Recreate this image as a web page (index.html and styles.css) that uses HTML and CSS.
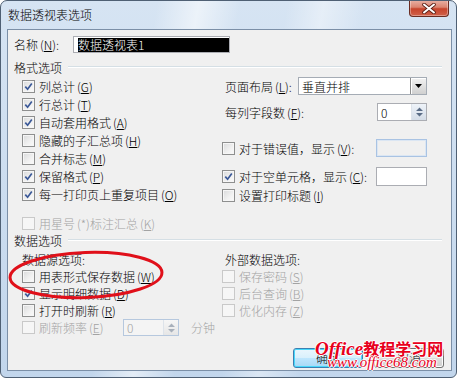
FILE: index.html
```html
<!DOCTYPE html>
<html lang="zh-CN">
<head>
<meta charset="utf-8">
<title>数据透视表选项</title>
<link rel="stylesheet" href="styles.css">
</head>
<body>
<div class="window">
  <div class="titlebar">
    <span class="title">数据透视表选项</span>
    <div class="close">
      <svg width="14" height="11" viewBox="0 0 14 11"><path d="M2 1.5 L12 9.5 M12 1.5 L2 9.5" stroke="#5a1e14" stroke-width="3.6" stroke-linecap="round"/><path d="M2 1.5 L12 9.5 M12 1.5 L2 9.5" stroke="#fff" stroke-width="2" stroke-linecap="round"/></svg>
    </div>
  </div>
  <div class="client">
    <div class="name-row">
      <span class="name-lbl">名称<span class="mn">(<u>N</u>)</span>:</span>
      <div class="name-input"><span class="sel">数据透视表1</span></div>
    </div>

    <div class="group-head"><span>格式选项</span><i class="etch"></i></div>
    <div class="cols">
      <div class="col left">
        <div class="row"><span class="cb on"><svg viewBox="0 0 11 11"><path d="M2.3 5.6 L4.6 8.2 L8.8 2.4" fill="none" stroke="#3b5998" stroke-width="1.7"/></svg></span><span>列总计<span class="mn">(<u>G</u>)</span></span></div>
        <div class="row"><span class="cb on"><svg viewBox="0 0 11 11"><path d="M2.3 5.6 L4.6 8.2 L8.8 2.4" fill="none" stroke="#3b5998" stroke-width="1.7"/></svg></span><span>行总计<span class="mn">(<u>T</u>)</span></span></div>
        <div class="row"><span class="cb on"><svg viewBox="0 0 11 11"><path d="M2.3 5.6 L4.6 8.2 L8.8 2.4" fill="none" stroke="#3b5998" stroke-width="1.7"/></svg></span><span>自动套用格式<span class="mn">(<u>A</u>)</span></span></div>
        <div class="row"><span class="cb"></span><span>隐藏的子汇总项<span class="mn">(<u>H</u>)</span></span></div>
        <div class="row"><span class="cb"></span><span>合并标志<span class="mn">(<u>M</u>)</span></span></div>
        <div class="row"><span class="cb on"><svg viewBox="0 0 11 11"><path d="M2.3 5.6 L4.6 8.2 L8.8 2.4" fill="none" stroke="#3b5998" stroke-width="1.7"/></svg></span><span>保留格式<span class="mn">(<u>P</u>)</span></span></div>
        <div class="row"><span class="cb on"><svg viewBox="0 0 11 11"><path d="M2.3 5.6 L4.6 8.2 L8.8 2.4" fill="none" stroke="#3b5998" stroke-width="1.7"/></svg></span><span>每一打印页上重复项目<span class="mn">(<u>O</u>)</span></span></div>
        <div class="row gap-top dis"><span class="cb off"></span><span>用星号<span class="mn">(*)</span>标注汇总<span class="mn">(<u>K</u>)</span></span></div>
      </div>
      <div class="col right">
        <div class="row"><span class="flbl">页面布局<span class="mn">(<u>L</u>)</span>:</span>
          <div class="combo"><span class="combo-text">垂直并排</span><span class="combo-btn"><svg width="7" height="4" viewBox="0 0 7 4"><path d="M0 0 H7 L3.5 4 Z" fill="#000"/></svg></span></div>
        </div>
        <div class="row r2"><span class="flbl">每列字段数<span class="mn">(<u>F</u>)</span>:</span>
          <div class="spin"><span class="spin-val">0</span><span class="spin-btn"><svg width="7" height="10" viewBox="0 0 7 10"><path d="M0 4 L3.5 0.5 L7 4 Z M0 6 L3.5 9.5 L7 6 Z" fill="#5a6c86"/></svg></span></div>
        </div>
        <div class="row r3"><span class="cb"></span><span>对于错误值，显示<span class="mn">(<u>V</u>)</span>:</span>
          <div class="tbox disabled"></div>
        </div>
        <div class="row r4"><span class="cb on"><svg viewBox="0 0 11 11"><path d="M2.3 5.6 L4.6 8.2 L8.8 2.4" fill="none" stroke="#3b5998" stroke-width="1.7"/></svg></span><span>对于空单元格，显示<span class="mn">(<u>C</u>)</span>:</span>
          <div class="tbox"></div>
        </div>
        <div class="row"><span class="cb"></span><span>设置打印标题<span class="mn">(<u>I</u>)</span></span></div>
      </div>
    </div>

    <div class="group-head"><span>数据选项</span><i class="etch"></i></div>
    <div class="cols">
      <div class="col left data">
        <div class="row head-row"><span>数据源选项:</span></div>
        <div class="row s"><span class="cb"></span><span>用表形式保存数据<span class="mn">(<u>W</u>)</span></span></div>
        <div class="row s"><span class="cb on"><svg viewBox="0 0 11 11"><path d="M2.3 5.6 L4.6 8.2 L8.8 2.4" fill="none" stroke="#3b5998" stroke-width="1.7"/></svg></span><span>显示明细数据<span class="mn">(<u>D</u>)</span></span></div>
        <div class="row s"><span class="cb"></span><span>打开时刷新<span class="mn">(<u>R</u>)</span></span></div>
        <div class="row s dis"><span class="cb off"></span><span class="rlbl">刷新频率<span class="mn">(<u>E</u>)</span></span>
          <div class="spin small disabled"><span class="spin-val">0</span><span class="spin-btn"><svg width="7" height="10" viewBox="0 0 7 10"><path d="M0 4 L3.5 0.5 L7 4 Z M0 6 L3.5 9.5 L7 6 Z" fill="#a8b0bb"/></svg></span></div>
          <span class="unit">分钟</span>
        </div>
      </div>
      <div class="col right data">
        <div class="row head-row"><span class="ext">外部数据选项:</span></div>
        <div class="row s dis"><span class="cb off"></span><span>保存密码<span class="mn">(<u>S</u>)</span></span></div>
        <div class="row s dis"><span class="cb off"></span><span>后台查询<span class="mn">(<u>B</u>)</span></span></div>
        <div class="row s dis"><span class="cb off"></span><span>优化内存<span class="mn">(<u>Z</u>)</span></span></div>
      </div>
    </div>

    <div class="buttons">
      <div class="btn default">确定</div>
      <div class="btn">取消</div>
    </div>
  </div>

  <svg class="mark" width="180" height="60" viewBox="0 0 180 60"><ellipse cx="85" cy="31" rx="76" ry="22.5" transform="rotate(-2 85 31)" fill="none" stroke="#e0101a" stroke-width="3"/></svg>

  <div class="watermark">
    <div class="wm1"><span class="wm-en">Office</span>教程学习网</div>
    <div class="wm2">www.office68.com</div>
  </div>
</div>
</body>
</html>
```

FILE: styles.css
```css
* { box-sizing: border-box; }
html, body { margin: 0; padding: 0; }
body {
  width: 457px;
  height: 378px;
  overflow: hidden;
  background: #fff;
  font-family: "Noto Sans CJK SC", "Noto Sans", sans-serif;
  font-size: 12px;
  font-weight: 300;
  color: #000;
}
u { text-decoration: underline; text-underline-offset: 1px; }

.window {
  position: relative;
  width: 457px;
  height: 378px;
  border: 1px solid #4f6074;
  border-radius: 7px 7px 6px 6px;
  overflow: hidden;
  background:
    linear-gradient(100deg, rgba(255,255,255,0) 30%, rgba(255,255,255,0.55) 38%, rgba(255,255,255,0) 46%, rgba(255,255,255,0) 55%, rgba(255,255,255,0.4) 62%, rgba(255,255,255,0) 70%),
    linear-gradient(180deg, #d6e4f3 0%, #c2d6ec 100%);
}

.titlebar {
  height: 28px;
  display: flex;
  justify-content: space-between;
  align-items: flex-start;
}
.title {
  margin: 6px 0 0 7px;
  line-height: 16px;
  font-size: 12px;
  color: #000;
}
.close {
  width: 40px;
  height: 17px;
  margin: -1px 7px 0 0;
  border: 1px solid #6a2c22;
  border-top: none;
  border-radius: 0 0 4px 4px;
  background: linear-gradient(180deg, #e9b3a6 0%, #db8470 45%, #c7442c 55%, #d0614a 100%);
  box-shadow: inset 0 0 0 1px rgba(255,255,255,0.35);
  display: flex;
  align-items: center;
  justify-content: center;
}

.client {
  margin-left: 6px;
  width: 445px;
  height: 342px;
  border: 1px solid #7b8fa7;
  background: #f0f0f0;
}

.mn { margin-left: 2px; }

.name-row {
  margin-top: 6px;
  height: 17px;
  padding-left: 6px;
  display: flex;
  align-items: center;
}
.name-lbl { width: 59px; }
.name-input {
  width: 157px;
  height: 17px;
  border: 1px solid #abadb3;
  background: #fff;
  padding: 1px 0 0 4px;
  display: flex;
}
.sel {
  flex: 1;
  background: #000;
  color: #fff;
  line-height: 14px;
  height: 14px;
  font-size: 12px;
}

.group-head {
  height: 16px;
  margin-top: 6px;
  padding-left: 6px;
  padding-right: 9px;
  display: flex;
  align-items: center;
}
.group-head + .cols { margin-top: 2px; }
.cols + .group-head { margin-top: 0; }
.etch {
  flex: 1;
  margin-left: 6px;
  height: 2px;
  border-top: 1px solid #d5dfe5;
  border-bottom: 1px solid #fff;
}

.cols { display: flex; }
.col { display: flex; flex-direction: column; }
.col.left { width: 214px; padding-left: 14px; }
.col.right { width: 205px; }

.row {
  height: 18px;
  display: flex;
  align-items: center;
  white-space: nowrap;
}
.row.s { height: 17px; }
.row.gap-top { margin-top: 11px; }
.dis { color: #a3a3a3; }

.cb {
  flex: none;
  width: 13px;
  height: 13px;
  margin-right: 4px;
  border: 1px solid #8e8f8f;
  background: linear-gradient(135deg, #d9dadb 0%, #f1f1f1 60%, #fbfbfb 100%);
  box-shadow: inset 0 0 0 1px #f6f6f6;
  display: flex;
}
.cb svg { width: 11px; height: 11px; }
.cb.off {
  border-color: #c9c9c9;
  background: #f6f6f6;
  box-shadow: none;
}

.flbl { margin-left: 3px; }
.right .row:first-child .flbl { width: 73px; }

.combo {
  width: 129px;
  height: 18px;
  border: 1px solid #a5acb5;
  background: #fff;
  display: flex;
  align-items: center;
}
.combo-text { flex: 1; padding-left: 3px; }
.combo-btn {
  width: 16px;
  height: 16px;
  border-left: 1px solid #8d8d8d;
  background: linear-gradient(180deg, #f2f2f2, #d0d0d0);
  box-shadow: inset 1px 1px 0 #fff;
  display: flex;
  align-items: center;
  justify-content: center;
}

.row.r2 { margin-top: 8px; }
.row.r3 { margin-top: 18px; }
.row.r4 { margin-top: 10px; height: 19px; }

.spin {
  margin-left: auto;
  width: 50px;
  height: 18px;
  border: 1px solid #abadb3;
  background: #fff;
  display: flex;
  align-items: center;
}
.spin-val { flex: 1; padding-left: 3px; }
.spin-btn {
  width: 15px;
  height: 16px;
  background: linear-gradient(180deg, #eef3f9, #d4dce7);
  border-left: 1px solid #dde3ea;
  display: flex;
  align-items: center;
  justify-content: center;
}
.spin.small {
  margin-left: 0;
  width: 56px;
  height: 17px;
  border-color: #b6c8de;
}
.spin.disabled { background: #f4f4f4; }
.spin.disabled .spin-val { color: #a3a3a3; }
.spin.disabled .spin-btn { height: 15px; background: linear-gradient(180deg, #f6f6f6, #e6e6e6); }

.tbox {
  margin-left: auto;
  width: 51px;
  height: 19px;
  border: 1px solid #abadb3;
  background: #fff;
}
.tbox.disabled {
  height: 18px;
  border: 1px solid #a9c3e3;
  box-shadow: inset 0 0 0 1px #dbe6f3;
  background: #f0f0f0;
}

.rlbl { width: 84px; }
.unit { margin-left: 12px; }

.data .head-row { height: 18px; }
.ext { margin-left: 3px; }

.buttons {
  margin-top: 12px;
  padding-right: 7px;
  display: flex;
  justify-content: flex-end;
  gap: 11px;
}
.btn {
  width: 70px;
  height: 20px;
  border: 1px solid #707070;
  border-radius: 3px;
  background: linear-gradient(180deg, #f3f3f3 0%, #ebebeb 48%, #dddddd 52%, #cfcfcf 100%);
  box-shadow: inset 0 0 0 1px #fcfcfc;
  display: flex;
  align-items: center;
  justify-content: center;
  line-height: 16px;
}
.btn.default {
  border-color: #3c7fb1;
  background: linear-gradient(180deg, #eaf6fd 0%, #d9f0fc 48%, #bee6fd 52%, #a7d9f5 100%);
  box-shadow: inset 0 0 0 1px #48d8fb;
}

.mark {
  position: absolute;
  left: 0;
  top: 243px;
}

.watermark {
  position: absolute;
  left: 314px;
  top: 338px;
  color: #e8001c;
  font-weight: bold;
  text-shadow: 1px 0 0 #fff, -1px 0 0 #fff, 0 1px 0 #fff, 0 -1px 0 #fff;
}
.wm1 {
  font-size: 16px;
  line-height: 19px;
  font-family: "Noto Sans CJK SC", sans-serif;
  white-space: nowrap;
}
.wm-en {
  font-family: "Liberation Serif", serif;
  font-style: italic;
  font-size: 19px;
  font-weight: bold;
}
.wm2 {
  margin-left: 12px;
  margin-top: -3px;
  font-family: "Liberation Serif", serif;
  font-style: italic;
  font-weight: normal;
  font-size: 15px;
  line-height: 15px;
  white-space: nowrap;
}
```
